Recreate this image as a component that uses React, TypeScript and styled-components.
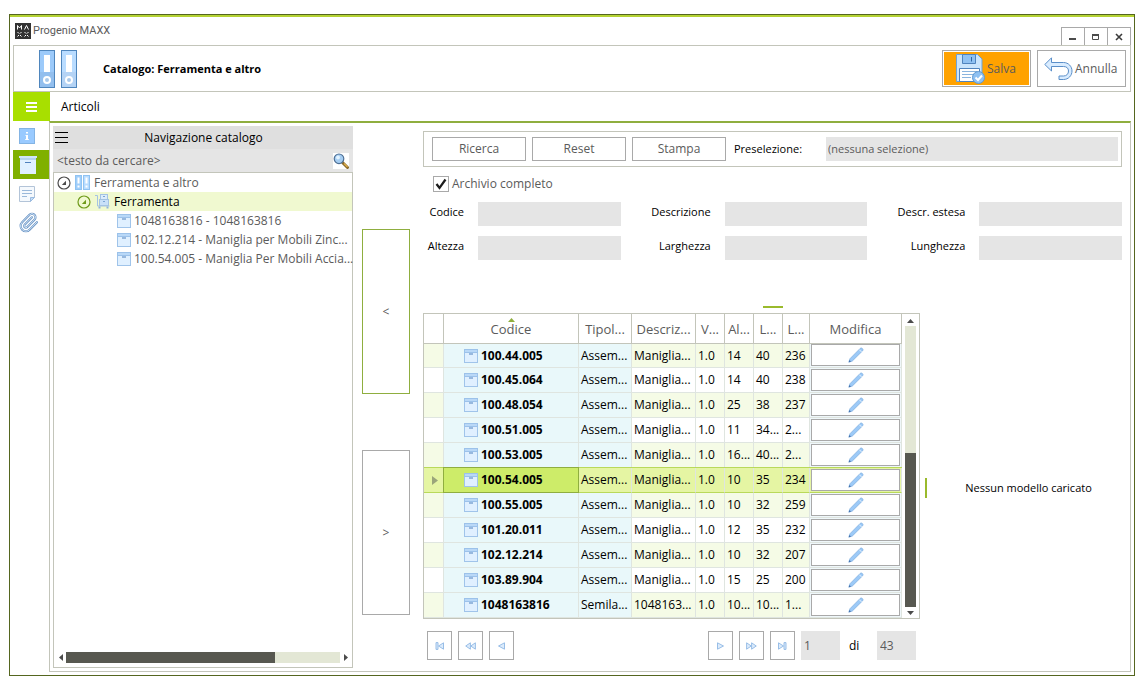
import React from "react";
import styled, { createGlobalStyle, css } from "styled-components";

const color = {
  frame: "#55661f",
  accent: "#8fae3f",
  line: "#c3c5ba",
  control: "#a9a9a9",
  field: "#e5e5e5",
  text: "#5b5b5b",
  ink: "#000000",
  lime: "#a8df00",
  olive: "#80b000",
  thumb: "#575850",
  track: "#e3e7d5",
};

const GlobalStyle = createGlobalStyle`
  *, *::before, *::after { box-sizing: border-box; }
  body {
    margin: 0;
    background: #fff;
    color: ${color.ink};
    font: 12px/16px "Open Sans", "Noto Sans", sans-serif;
  }
  button, input, select { font: inherit; margin: 0; padding: 0; border-radius: 0; }
  button { background: none; border: 0; color: inherit; }
  svg { display: block; flex: none; }
  ul { list-style: none; margin: 0; padding: 0; }
  h1, h2, p { margin: 0; font-size: inherit; }
`;

/* ---------- window frame ---------- */

const Page = styled.div`
  min-height: 100vh;
  padding: 14px 5px 14px 9px;
  display: flex;
`;

const Window = styled.div`
  flex: 1;
  min-width: 0;
  display: flex;
  flex-direction: column;
  border: 1px solid ${color.frame};
  padding: 0 3px 3px;
`;

const TopStripe = styled.div`
  height: 2px;
  margin: 0 -3px;
  background: #b5d334;
`;

const TitleBar = styled.div`
  display: flex;
  align-items: center;
  height: 28px;
  padding-left: 2px;
  gap: 2px;
  color: ${color.text};
  font-family: Roboto, sans-serif;
  font-size: 11px;
`;

const WindowButtons = styled.div`
  display: flex;
  align-self: flex-end;
  margin-left: auto;
`;

const WindowButton = styled.button`
  display: grid;
  place-items: center;
  width: 24px;
  height: 18px;
  border: 1px solid ${color.control};
  border-bottom: 0;
  & + & { margin-left: -1px; }
`;

const Header = styled.header`
  display: flex;
  align-items: center;
  gap: 6px;
  height: 47px;
  padding: 0 4px 0 25px;
  border: 1px solid ${color.line};
`;

const HeaderTitle = styled.h1`
  flex: 1;
  padding-left: 20px;
  font-size: 11px;
  font-weight: 700;
`;

const ActionButton = styled.button<{ $primary?: boolean }>`
  display: flex;
  align-items: center;
  gap: 2px;
  width: 89px;
  height: 37px;
  padding-left: ${(p) => (p.$primary ? 12 : 6)}px;
  border: 1px solid ${color.control};
  color: ${color.text};
  ${(p) =>
    p.$primary &&
    css`
      background: #ffa200;
      box-shadow: inset 0 0 0 1px #fff;
    `}
`;

const Workspace = styled.div`
  flex: 1;
  display: grid;
  grid-template-columns: 36px minmax(0, 1fr);
`;

const Rail = styled.nav`
  display: flex;
  flex-direction: column;
`;

const RailButton = styled.button<{ $active?: boolean }>`
  display: flex;
  align-items: center;
  height: 29px;
  padding-left: 5px;
  background: ${(p) => (p.$active ? color.olive : "transparent")};
`;

const MenuButton = styled.button`
  display: grid;
  place-items: center;
  height: 29px;
  margin-right: -1px;
  background: ${color.lime};
`;

const Main = styled.main`
  display: flex;
  flex-direction: column;
`;

const TabBar = styled.div`
  display: flex;
  align-items: center;
  height: 29px;
  padding-left: 12px;
`;

const Content = styled.div`
  flex: 1;
  display: flex;
  border: 1px solid ${color.line};
  border-top: 2px solid ${color.accent};
  padding: 3px 8px 3px 3px;
`;

/* ---------- catalogue navigation ---------- */

const NavPanel = styled.section`
  display: flex;
  flex-direction: column;
  width: 300px;
`;

const NavHeader = styled.div`
  display: flex;
  align-items: center;
  height: 23px;
  padding: 0 14px 0 2px;
  background: #dfdfdf;
`;

const NavTitle = styled.h2`
  flex: 1;
  font-weight: 400;
  text-align: center;
`;

const SearchRow = styled.div`
  display: flex;
  align-items: center;
  height: 23px;
  padding: 0 4px 0 4px;
  background: ${color.field};
`;

const SearchInput = styled.input`
  flex: 1;
  min-width: 0;
  border: 0;
  background: none;
  color: ${color.text};
  &::placeholder { color: ${color.text}; opacity: 1; }
`;

const TreeBox = styled.div`
  flex: 1;
  display: flex;
  flex-direction: column;
  border: 1px solid ${color.line};
`;

const Tree = styled.ul`
  flex: 1;
`;

const TreeRow = styled.li<{ $level: number; $selected?: boolean }>`
  display: flex;
  align-items: center;
  height: 19px;
  gap: ${(p) => (p.$level === 2 ? 3 : 4)}px;
  padding-left: ${(p) => [3, 23, 63][p.$level]}px;
  white-space: nowrap;
  color: ${(p) => (p.$selected ? color.ink : color.text)};
  background: ${(p) => (p.$selected ? "#f0f9d0" : "transparent")};
`;

const ScrollRow = styled.div`
  display: flex;
  align-items: center;
  gap: 3px;
  height: 19px;
  padding: 0 4px;
`;

const ScrollColumn = styled.div`
  display: flex;
  flex-direction: column;
  align-items: center;
  gap: 3px;
  width: 17px;
  padding: 4px 0 3px;
`;

const Track = styled.div<{ $vertical?: boolean }>`
  flex: 1;
  display: flex;
  flex-direction: ${(p) => (p.$vertical ? "column" : "row")};
  ${(p) => (p.$vertical ? "width: 11px;" : "height: 11px;")}
  background: ${color.track};
`;

const TrackPart = styled.div<{ $share: number; $thumb?: boolean }>`
  flex: ${(p) => p.$share};
  background: ${(p) => (p.$thumb ? color.thumb : "transparent")};
`;

/* ---------- transfer buttons ---------- */

const Transfer = styled.div`
  display: flex;
  flex-direction: column;
  gap: 56px;
  padding: 103px 13px 0 9px;
`;

const TransferButton = styled.button<{ $active?: boolean }>`
  width: 48px;
  height: 165px;
  border: 1px solid ${(p) => (p.$active ? color.accent : color.control)};
  color: ${color.text};
`;

/* ---------- search form ---------- */

const Body = styled.div`
  flex: 1;
  min-width: 0;
  display: flex;
  flex-direction: column;
  padding-top: 5px;
`;

const FilterBar = styled.div`
  display: flex;
  align-items: center;
  gap: 6px;
  height: 36px;
  padding: 0 3px 0 8px;
  border: 1px solid ${color.line};
`;

const FilterButton = styled.button`
  width: 94px;
  height: 24px;
  border: 1px solid ${color.control};
  color: ${color.text};
`;

const PresetLabel = styled.label`
  width: 88px;
  padding-left: 2px;
  font-size: 11px;
`;

const PresetSelect = styled.select`
  flex: 1;
  min-width: 0;
  height: 24px;
  padding: 0 2px;
  border: 0;
  appearance: none;
  background: ${color.field};
  color: ${color.text};
  font-size: 11px;
`;

const CheckLabel = styled.label`
  display: flex;
  align-items: center;
  align-self: flex-start;
  gap: 3px;
  margin: 9px 0 10px 10px;
  color: ${color.text};
`;

const CheckStack = styled.span`
  display: grid;
  place-items: center;
  & > * { grid-area: 1 / 1; }
  & > svg { pointer-events: none; }
  & > input:not(:checked) + svg { visibility: hidden; }
`;

const CheckInput = styled.input`
  width: 16px;
  height: 16px;
  appearance: none;
  border: 1px solid ${color.control};
`;

const Fields = styled.div`
  display: grid;
  grid-template-columns: 41px 1fr 76px 1fr 84px 1fr;
  gap: 10px 14px;
`;

const FieldLabel = styled.label`
  padding-top: 2px;
  font-size: 11px;
  text-align: right;
`;

const FieldInput = styled.input`
  width: 100%;
  min-width: 0;
  height: 24px;
  padding: 0 4px;
  border: 0;
  background: ${color.field};
`;

const Grip = styled.div<{ $vertical?: boolean }>`
  background: #9aba2c;
  ${(p) =>
    p.$vertical
      ? css`
          width: 2px;
          height: 20px;
          align-self: center;
          margin-left: 5px;
        `
      : css`
          width: 20px;
          height: 2px;
          align-self: center;
          margin: 46px 0 5px;
        `}
`;

/* ---------- results ---------- */

const Results = styled.div`
  flex: 1;
  display: flex;
  padding-bottom: 5px;
`;

const ListPane = styled.section`
  flex: 0 0 497px;
`;

const GridBox = styled.div`
  display: flex;
  border: 1px solid ${color.line};
`;

const Table = styled.table`
  flex: 1;
  table-layout: fixed;
  border-spacing: 0;
`;

const HeadCell = styled.th`
  position: relative;
  height: 30px;
  padding: 0;
  border-right: 1px solid ${color.line};
  border-bottom: 1px solid ${color.line};
  color: ${color.text};
  font-weight: 400;
  font-size: 13px;
  white-space: nowrap;
`;

const SortMark = styled.svg`
  position: absolute;
  top: 4px;
  left: 64px;
`;

const Cell = styled.td<{ $tone?: "key" | "edit"; $bold?: boolean }>`
  height: 25px;
  padding: 0 0 0 2px;
  border-right: 1px solid #dfe5e0;
  border-bottom: 1px solid #dfe5e0;
  white-space: nowrap;
  font-weight: ${(p) => (p.$bold ? 700 : 400)};
  ${(p) => p.$tone === "key" && "background: #e9f8fa;"}
  ${(p) => p.$tone === "edit" && "background: #eff7fa; padding: 0 1px 1px 1px;"}
`;

const Row = styled.tr<{ $selected?: boolean }>`
  &:nth-child(odd) { background: #f5fbe6; }
  &:first-child > td { height: 24px; }
  ${(p) =>
    p.$selected &&
    css`
      &&, && > td { background: #e5f5a3; }
      & > td {
        position: relative;
        border-bottom-color: #b9d95a;
        box-shadow: 0 -1px #b9d95a;
      }
      && > td:nth-child(2) {
        z-index: 1;
        background: #cdec69;
        border-color: ${color.accent};
        box-shadow: 0 -1px ${color.accent}, -1px 0 ${color.accent}, -1px -1px ${color.accent};
      }
    `}
`;

const CodeContent = styled.span`
  display: flex;
  align-items: center;
  gap: 3px;
  padding-left: 18px;
`;

const EditButton = styled.button`
  display: grid;
  place-items: center;
  width: 100%;
  height: 22px;
  border: 1px solid ${color.control};
  background: #fff;
`;

const Pager = styled.div`
  display: flex;
  align-items: center;
  gap: 6px;
  padding: 12px 4px 3px;
`;

const PagerButton = styled.button`
  display: grid;
  place-items: center;
  width: 25px;
  height: 29px;
  border: 1px solid ${color.control};
`;

const PagerSpace = styled.span`
  flex: 1;
`;

const PagerInput = styled.input`
  width: 39px;
  height: 29px;
  padding: 0 3px;
  border: 0;
  background: ${color.field};
  color: ${color.text};
`;

const PagerText = styled.span`
  width: 25px;
  padding-left: 3px;
`;

const ModelPane = styled.p`
  flex: 1;
  align-self: center;
  padding-left: 8px;
  font-size: 11px;
  text-align: center;
`;

/* ---------- icons ---------- */

const Logo = () => (
  <svg width="16" height="16" viewBox="0 0 16 16" fill="none" stroke="#fff">
    <rect width="16" height="16" fill="#333" stroke="none" />
    <path d="M2.5 6.5v-4l2 2.5 2-2.5v4M9.5 6.5l2-4 2 4" />
    <path d="M2.5 9l1.500 1.500M6.500 9L5 10.500M2.500 13.500L4 12M6.500 13.500L5 12M9.500 9l1.500 1.500M13.500 9L12 10.500M9.500 13.500L11 12M13.500 13.500L12 12" />
  </svg>
);

const BinderIcon = () => (
  <svg width="38" height="38" viewBox="0 0 38 38">
    {[0, 22].map((x, i) => (
      <g key={x} transform={`translate(${x} 0)`}>
        <rect x=".5" y=".5" width="15" height="37" fill={i ? "#b9dcff" : "#9ccafa"} stroke="#4f86bd" />
        <rect x="1" y="22" width="14" height="15" fill={i ? "#b4d3f5" : "#93bfee"} />
        <rect x="5" y="5" width="6" height="17" fill="#fff" />
        <circle cx="8" cy="30" r="3" fill="#a9c9ea" stroke="#fff" strokeWidth="2" />
      </g>
    ))}
  </svg>
);

const SmallBinderIcon = () => (
  <svg width="15" height="15" viewBox="0 0 15 15">
    {[0, 8].map((x, i) => (
      <g key={x} transform={`translate(${x} 0)`}>
        <rect x=".5" y=".5" width="6" height="14" fill={i ? "#b9dcff" : "#a0cefa"} stroke="#8fc3f2" />
        <rect x="2.500" y="2.500" width="2" height="6" fill="#fff" />
        <rect x="2.500" y="10.500" width="2" height="2" fill="#fff" />
      </g>
    ))}
  </svg>
);

const SaveIcon = () => (
  <svg width="30" height="30" viewBox="0 0 30 30" fill="none" stroke="#4f83bd">
    <path d="M1.500.5h21l4.500 4.500v22.500h-25.500z" fill="#c9e4fc" stroke="#6fa3d6" />
    <path d="M7.500.5h13v9h-13z" fill="#8fc1f2" />
    <path d="M16.500 3v4.500" stroke="#2f66a3" />
    <path d="M4.500 14.500h20v13h-20z" fill="#fff" />
    <path d="M7 17.500h15M7 20.500h12M7 23.500h9" stroke="#8ab4de" />
    <circle cx="23.500" cy="23.500" r="6" fill="#8fc1f2" stroke="#5f98d1" />
    <path d="M20.500 23.500l2.500 2.500 4-4.500" stroke="#fff" strokeWidth="2" />
  </svg>
);

const UndoIcon = () => (
  <svg width="29" height="24" viewBox="0 0 29 24">
    <path
      d="M.8 7.500L7.500.8v4.700h12c5 0 8.500 4 8.500 8.500s-3.500 8.500-8.500 8.500h-4.500v-3.500h4.500c3 0 5-2 5-5s-2-4.500-5-4.500h-12v4.500z"
      fill="#d9ecff"
      stroke="#5b8fc9"
    />
  </svg>
);

const InfoIcon = () => (
  <svg width="18" height="18" viewBox="0 0 18 18">
    <rect x="1.500" y="1.500" width="15" height="15" fill="#99caff" stroke="#84b4e4" />
    <path d="M8 5h2v1.500H8zM7.500 8H10v4h.8v1H7.200v-1H8V9h-.5z" fill="#fff" />
  </svg>
);

const BoxIcon = () => (
  <svg width="14" height="14" viewBox="0 0 14 14">
    <rect x=".5" y="3.500" width="13" height="10" fill="#e0f0ff" stroke="#a0c4ea" />
    <rect x=".5" y=".5" width="13" height="3" fill="#b9d8f7" stroke="#9cc2ea" />
    <path d="M5 5h4" stroke="#4f80bd" />
  </svg>
);

const LargeBoxIcon = () => (
  <svg width="19" height="18" viewBox="0 0 19 18">
    <rect x="2" y="3" width="16" height="15" fill="#e0f0ff" />
    <rect x="1" y="0" width="18" height="2" fill="#cfe5fa" />
    <rect x="2" y="2" width="16" height="2" fill="#b5d3f0" />
    <path d="M7 6.500h6" stroke="#4f80bd" />
  </svg>
);

const NoteIcon = () => (
  <svg width="18" height="18" viewBox="0 0 18 18" fill="none" stroke="#b3c4d8">
    <path d="M1.500 1.500h15v11l-4 4h-11z" fill="#f5f9fd" />
    <path d="M12.500 16.500v-4h4z" fill="#c5ddf6" stroke="#9bbbe0" />
    <path d="M4 5.500h10M4 8.500h10M4 11.500h5" stroke="#9bb9da" />
  </svg>
);

const clipPath =
  "m16 6-8.414 8.586a2 2 0 0 0 2.829 2.829l8.414-8.586a4 4 0 1 0-5.657-5.657l-8.379 8.551a6 6 0 1 0 8.485 8.485l8.379-8.551";

const ClipIcon = () => (
  <svg width="21" height="21" viewBox="0 0 24 24" fill="none" strokeLinecap="round">
    <path d={clipPath} stroke="#5f8cc0" strokeWidth="2.400" />
    <path d={clipPath} stroke="#e6f2fe" strokeWidth="1" />
  </svg>
);

const SearchIcon = () => (
  <svg width="16" height="16" viewBox="0 0 16 16">
    <rect width="16" height="16" fill="#fff" />
    <path d="M9.500 9.500l5 5" stroke="#8a6a2b" strokeWidth="3" strokeLinecap="round" />
    <path d="M11 10.500l3.500 3.500" stroke="#e0b04c" strokeWidth="1.200" />
    <circle cx="6" cy="5.800" r="4.800" fill="#a5cdf2" stroke="#4f6f94" strokeWidth="1.200" />
    <circle cx="5" cy="4.500" r="1.900" fill="#e2f3ff" />
  </svg>
);

const ExpanderIcon = ({ tint }: { tint: string }) => (
  <svg width="14" height="14" viewBox="0 0 14 14">
    <circle cx="7" cy="7" r="6" fill="none" stroke={tint} strokeWidth="1.200" />
    <path d="M9 4.800V9H4.800z" fill={tint} />
  </svg>
);

const TrolleyIcon = () => (
  <svg width="15" height="15" viewBox="0 0 15 15" fill="none" stroke="#a4c3e3">
    <path d="M0 1.500h2.500v10.500h12" />
    <rect x="5.500" y=".5" width="7" height="5" fill="#dcecfb" />
    <rect x="4.500" y="5.500" width="9" height="6" fill="#c8e0f8" />
    <path d="M8 2.500h2M8 7.500h2" stroke="#7ba4d2" />
    <path d="M4.500 12.500v2M12.500 12.500v2" stroke="#8fb3da" strokeWidth="2" />
  </svg>
);

const PencilIcon = () => (
  <svg width="16" height="16" viewBox="0 0 16 16">
    <path d="M.8 15.200l1.200-3.500L12.200 1.400c1.400-1.200 3.700.9 2.400 2.400L4.300 14z" fill="#9ccaf8" stroke="#7fadde" strokeWidth=".8" />
    <path d="M11.300 2.700l2.200 2.200" stroke="#e6f2fd" />
    <path d="M.8 15.200l.7-2.200 1.500 1.500z" fill="#3d6ca8" />
  </svg>
);

const Bars = ({ width, gap, tint, weight }: { width: number; gap: number; tint: string; weight: number }) => (
  <svg width={width} height={gap * 2 + weight}>
    {[0, 1, 2].map((n) => (
      <rect key={n} y={n * gap} width={width} height={weight} fill={tint} />
    ))}
  </svg>
);

type Dir = "up" | "down" | "left" | "right";
const arrowPaths: Record<Dir, string> = {
  up: "M0 5L3.500 1 7 5z",
  down: "M0 1l3.500 4L7 1z",
  left: "M5 0L1 3.500 5 7z",
  right: "M1 0l4 3.500L1 7z",
};

const Arrow = ({ dir, tint = "#4b4b4b" }: { dir: Dir; tint?: string }) => {
  const flat = dir === "up" || dir === "down";
  return (
    <svg width={flat ? 7 : 5} height={flat ? 5 : 7}>
      <path d={arrowPaths[dir]} fill={tint} />
    </svg>
  );
};

const PagerIcon = ({ kind, flip }: { kind: "step" | "fast" | "end"; flip?: boolean }) => (
  <svg width="11" height="8" viewBox="0 0 11 8" fill="#dcebfb" stroke="#8fb8e4" strokeWidth=".9">
    <g transform={flip ? "translate(11 0) scale(-1 1)" : undefined}>
      {kind === "step" && <path d="M2.500.8L8.500 4 2.500 7.200z" />}
      {kind === "fast" && <path d="M.6.800L5.300 4 .6 7.200zM5.600.8L10.300 4 5.600 7.200z" />}
      {kind === "end" && <path d="M1.500.8L6.500 4 1.500 7.200zM7 .600h2v6.800H7z" />}
    </g>
  </svg>
);

/* ---------- data ---------- */

const treeItems = [
  "1048163816 - 1048163816",
  "102.12.214 - Maniglia per Mobili Zinc...",
  "100.54.005 - Maniglia Per Mobili Accia...",
];

const columns = [
  { title: "", width: 20 },
  { title: "Codice", width: 135, sorted: true },
  { title: "Tipol...", width: 53 },
  { title: "Descriz...", width: 64 },
  { title: "V...", width: 29 },
  { title: "Al...", width: 29 },
  { title: "L...", width: 29 },
  { title: "L...", width: 27 },
  { title: "Modifica", width: 92 },
];

const rows = [
  ["100.44.005", "Assem...", "Maniglia...", "1.0", "14", "40", "236"],
  ["100.45.064", "Assem...", "Maniglia...", "1.0", "14", "40", "238"],
  ["100.48.054", "Assem...", "Maniglia...", "1.0", "25", "38", "237"],
  ["100.51.005", "Assem...", "Maniglia...", "1.0", "11", "34...", "2..."],
  ["100.53.005", "Assem...", "Maniglia...", "1.0", "16...", "40...", "2..."],
  ["100.54.005", "Assem...", "Maniglia...", "1.0", "10", "35", "234"],
  ["100.55.005", "Assem...", "Maniglia...", "1.0", "10", "32", "259"],
  ["101.20.011", "Assem...", "Maniglia...", "1.0", "12", "35", "232"],
  ["102.12.214", "Assem...", "Maniglia...", "1.0", "10", "32", "207"],
  ["103.89.904", "Assem...", "Maniglia...", "1.0", "15", "25", "200"],
  ["1048163816", "Semila...", "1048163...", "1.0", "10...", "10...", "1..."],
];
const selectedCode = "100.54.005";

const fields = [
  ["codice", "Codice"],
  ["descrizione", "Descrizione"],
  ["estesa", "Descr. estesa"],
  ["altezza", "Altezza"],
  ["larghezza", "Larghezza"],
  ["lunghezza", "Lunghezza"],
];

/* ---------- sections ---------- */

const CatalogNav = () => (
  <NavPanel>
    <NavHeader>
      <button aria-label="Menu catalogo">
        <Bars width={13} gap={5} weight={1} tint="#000" />
      </button>
      <NavTitle>Navigazione catalogo</NavTitle>
    </NavHeader>
    <SearchRow>
      <SearchInput aria-label="Testo da cercare" placeholder="<testo da cercare>" />
      <button aria-label="Cerca">
        <SearchIcon />
      </button>
    </SearchRow>
    <TreeBox>
      <Tree>
        <TreeRow $level={0}>
          <ExpanderIcon tint="#4b4b4b" />
          <SmallBinderIcon />
          Ferramenta e altro
        </TreeRow>
        <TreeRow $level={1} $selected>
          <ExpanderIcon tint="#6f9a1a" />
          <TrolleyIcon />
          Ferramenta
        </TreeRow>
        {treeItems.map((item) => (
          <TreeRow key={item} $level={2}>
            <BoxIcon />
            {item}
          </TreeRow>
        ))}
      </Tree>
      <ScrollRow>
        <Arrow dir="left" />
        <Track>
          <TrackPart $share={209} $thumb />
          <TrackPart $share={65} />
        </Track>
        <Arrow dir="right" />
      </ScrollRow>
    </TreeBox>
  </NavPanel>
);

const SearchForm = () => (
  <>
    <FilterBar>
      <FilterButton>Ricerca</FilterButton>
      <FilterButton>Reset</FilterButton>
      <FilterButton>Stampa</FilterButton>
      <PresetLabel htmlFor="preselezione">Preselezione:</PresetLabel>
      <PresetSelect id="preselezione">
        <option>(nessuna selezione)</option>
      </PresetSelect>
    </FilterBar>
    <CheckLabel>
      <CheckStack>
        <CheckInput type="checkbox" defaultChecked />
        <svg width="12" height="12" viewBox="0 0 12 12" fill="none" stroke="#1c1c1c" strokeWidth="2.200">
          <path d="M1.500 6l3 4 6-8.500" />
        </svg>
      </CheckStack>
      Archivio completo
    </CheckLabel>
    <Fields>
      {fields.map(([id, label]) => (
        <React.Fragment key={id}>
          <FieldLabel htmlFor={id}>{label}</FieldLabel>
          <FieldInput id={id} />
        </React.Fragment>
      ))}
    </Fields>
  </>
);

const ArticleTable = () => (
  <GridBox>
    <Table>
      <colgroup>
        {columns.map((c, i) => (
          <col key={i} width={c.width} />
        ))}
      </colgroup>
      <thead>
        <tr>
          {columns.map((c, i) => (
            <HeadCell key={i}>
              {c.title}
              {c.sorted && (
                <SortMark width="7" height="4">
                  <path d="M0 4L3.500 0 7 4z" fill={color.accent} />
                </SortMark>
              )}
            </HeadCell>
          ))}
        </tr>
      </thead>
      <tbody>
        {rows.map(([code, type, ...rest]) => {
          const selected = code === selectedCode;
          return (
            <Row key={code} $selected={selected}>
              <Cell>
                {selected && (
                  <svg width="16" height="9">
                    <path d="M6 0l6 4.500L6 9z" fill="#9aa57a" />
                  </svg>
                )}
              </Cell>
              <Cell $tone="key" $bold>
                <CodeContent>
                  <BoxIcon />
                  {code}
                </CodeContent>
              </Cell>
              <Cell $tone="key">{type}</Cell>
              {rest.map((value, i) => (
                <Cell key={i}>{value}</Cell>
              ))}
              <Cell $tone="edit">
                <EditButton aria-label={`Modifica ${code}`}>
                  <PencilIcon />
                </EditButton>
              </Cell>
            </Row>
          );
        })}
      </tbody>
    </Table>
    <ScrollColumn>
      <Arrow dir="up" />
      <Track $vertical>
        <TrackPart $share={127} />
        <TrackPart $share={154} $thumb />
      </Track>
      <Arrow dir="down" />
    </ScrollColumn>
  </GridBox>
);

const PagerBar = () => (
  <Pager>
    <PagerButton aria-label="Prima pagina"><PagerIcon kind="end" flip /></PagerButton>
    <PagerButton aria-label="Indietro veloce"><PagerIcon kind="fast" flip /></PagerButton>
    <PagerButton aria-label="Pagina precedente"><PagerIcon kind="step" flip /></PagerButton>
    <PagerSpace />
    <PagerButton aria-label="Pagina successiva"><PagerIcon kind="step" /></PagerButton>
    <PagerButton aria-label="Avanti veloce"><PagerIcon kind="fast" /></PagerButton>
    <PagerButton aria-label="Ultima pagina"><PagerIcon kind="end" /></PagerButton>
    <PagerInput aria-label="Pagina" defaultValue="1" />
    <PagerText>di</PagerText>
    <PagerInput aria-label="Pagine totali" defaultValue="43" readOnly />
  </Pager>
);

export default function App() {
  return (
    <>
      <GlobalStyle />
      <Page>
        <Window>
          <TopStripe />
          <TitleBar>
            <Logo />
            Progenio MAXX
            <WindowButtons>
              <WindowButton aria-label="Riduci">
                <svg width="8" height="8"><rect y="5" width="7" height="2" fill="#4b4b4b" /></svg>
              </WindowButton>
              <WindowButton aria-label="Ingrandisci">
                <svg width="8" height="8" fill="none" stroke="#4b4b4b">
                  <path d="M.5 1.500h6v5h-6z" />
                  <path d="M0 2h7" strokeWidth="2" />
                </svg>
              </WindowButton>
              <WindowButton aria-label="Chiudi">
                <svg width="8" height="8"><path d="M1 1l6 6M7 1L1 7" stroke="#3b3b3b" strokeWidth="1.600" /></svg>
              </WindowButton>
            </WindowButtons>
          </TitleBar>
          <Header>
            <BinderIcon />
            <HeaderTitle>Catalogo: Ferramenta e altro</HeaderTitle>
            <ActionButton $primary>
              <SaveIcon />
              Salva
            </ActionButton>
            <ActionButton>
              <UndoIcon />
              Annulla
            </ActionButton>
          </Header>
          <Workspace>
            <Rail>
              <MenuButton aria-label="Menu">
                <Bars width={11} gap={4} weight={2} tint="#fff" />
              </MenuButton>
              <RailButton aria-label="Informazioni"><InfoIcon /></RailButton>
              <RailButton aria-label="Articoli" $active><LargeBoxIcon /></RailButton>
              <RailButton aria-label="Note"><NoteIcon /></RailButton>
              <RailButton aria-label="Allegati"><ClipIcon /></RailButton>
            </Rail>
            <Main>
              <TabBar>Articoli</TabBar>
              <Content>
                <CatalogNav />
                <Transfer>
                  <TransferButton $active>&lt;</TransferButton>
                  <TransferButton>&gt;</TransferButton>
                </Transfer>
                <Body>
                  <SearchForm />
                  <Grip />
                  <Results>
                    <ListPane>
                      <ArticleTable />
                      <PagerBar />
                    </ListPane>
                    <Grip $vertical />
                    <ModelPane>Nessun modello caricato</ModelPane>
                  </Results>
                </Body>
              </Content>
            </Main>
          </Workspace>
        </Window>
      </Page>
    </>
  );
}
